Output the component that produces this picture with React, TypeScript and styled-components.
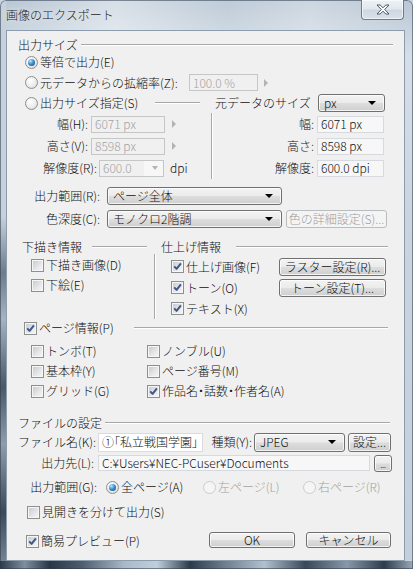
import styled, { createGlobalStyle } from 'styled-components';

const GlobalStyle = createGlobalStyle`
  html, body {
    margin: 0;
    padding: 0;
  }
  body {
    width: 413px;
    height: 569px;
    overflow: hidden;
    background: #c8d3de;
    font-family: "Noto Sans CJK JP", "Noto Sans", sans-serif;
    font-size: 12px;
    font-weight: 300;
    line-height: 14px;
    color: #111;
  }
`;

const Window = styled.div`
  box-sizing: border-box;
  width: 413px;
  height: 569px;
  display: flex;
  flex-direction: column;
  border-radius: 6px 6px 0 0;
  overflow: hidden;
  box-shadow: inset 0 0 0 1px rgba(45, 60, 78, 0.55);
  background:
    linear-gradient(90deg, #2c3948 0%, #7f8ea0 6%, #2a3644 12%, #4f5e70 20%, #a9b8c8 30%, #c2cedb 38%, #2d3a49 46%, #6b7a8c 54%, #b2c0ce 64%, #3a4756 74%, #8898aa 84%, #2f3b4a 93%, #9aa8b7 100%) bottom / 100% 8px no-repeat,
    linear-gradient(180deg, #c6d1dc 0%, #c6d1dc 38%, #6d7b8a 48%, #a6b3c1 56%, #4a5766 68%, #8e9cab 78%, #3c4958 90%, #7d8b9b 100%) left / 6px 100% no-repeat,
    linear-gradient(90deg, rgba(255, 255, 255, 0) 0%, rgba(255, 255, 255, 0.45) 28%, rgba(255, 255, 255, 0.1) 55%, rgba(255, 255, 255, 0.3) 75%, rgba(255, 255, 255, 0) 100%) top / 100% 30px no-repeat,
    linear-gradient(180deg, #b7c5d3 0%, #d6dfe8 10%, #c9d4df 40%, #c3cfdb 100%);
`;

const TitleBar = styled.div`
  flex: none;
  height: 30px;
  display: flex;
  align-items: flex-start;
  justify-content: space-between;
  padding-left: 6px;
`;

const Title = styled.span`
  margin-top: 8px;
  color: #1c1c1c;
  text-shadow: 0 0 6px rgba(255, 255, 255, 0.9);
`;

const CloseButton = styled.div`
  box-sizing: border-box;
  width: 43px;
  height: 20px;
  margin-right: 9px;
  display: flex;
  align-items: center;
  justify-content: center;
  border: 1px solid #6f7b88;
  border-top: none;
  border-radius: 0 0 4px 4px;
  background: linear-gradient(180deg, #eef2f6 0%, #e2e8ef 45%, #cfd8e2 55%, #d9e1ea 100%);
  box-shadow: inset 0 0 0 1px rgba(255, 255, 255, 0.6);
`;

const Client = styled.div`
  box-sizing: border-box;
  flex: none;
  height: 531px;
  margin: 0 8px 0 6px;
  padding: 7px 11px 0;
  border: 1px solid #8d9cac;
  background: #f0f0f0;
  display: flex;
  flex-direction: column;
`;

const Header = styled.div<{ $pl?: number; $mt?: number }>`
  display: flex;
  align-items: center;
  height: 14px;
  padding-left: ${(p) => p.$pl ?? 0}px;
  margin-top: ${(p) => p.$mt ?? 0}px;
  white-space: nowrap;
`;

const Rule = styled.div<{ $ml?: number; $mr?: number }>`
  flex: 1;
  height: 0;
  margin-left: ${(p) => p.$ml ?? 3}px;
  margin-right: ${(p) => p.$mr ?? 0}px;
  border-top: 1px solid #a8a8a8;
  border-bottom: 1px solid #ffffff;
`;

const Row = styled.div<{ $h?: number; $pl?: number; $pr?: number; $mt?: number }>`
  display: flex;
  align-items: center;
  height: ${(p) => p.$h ?? 20}px;
  padding-left: ${(p) => p.$pl ?? 0}px;
  padding-right: ${(p) => p.$pr ?? 0}px;
  margin-top: ${(p) => p.$mt ?? 0}px;
  white-space: nowrap;
`;

const RadioDot = styled.span<{ $on?: boolean; $off?: boolean; $ml?: number }>`
  box-sizing: border-box;
  flex: none;
  width: 13px;
  height: 13px;
  margin-left: ${(p) => p.$ml ?? 0}px;
  border-radius: 50%;
  border: 1px solid ${(p) => (p.$off ? '#cbcccd' : '#8e8f8f')};
  background: ${(p) =>
    p.$off ? '#f5f5f5' : 'radial-gradient(circle at 40% 35%, #ffffff 0%, #ececec 55%, #d0d0d0 100%)'};
  display: flex;
  align-items: center;
  justify-content: center;

  &::after {
    content: '';
    display: ${(p) => (p.$on ? 'block' : 'none')};
    width: 7px;
    height: 7px;
    border-radius: 50%;
    background: radial-gradient(circle at 35% 30%, #bfe9fc 0%, #3d92d2 45%, #0e3f76 100%);
  }
`;

const CheckBox = styled.span`
  box-sizing: border-box;
  flex: none;
  width: 13px;
  height: 13px;
  border: 1px solid #8e8f8f;
  background: linear-gradient(135deg, #c4c8cd 0%, #e9eaeb 65%, #f7f7f7 100%);
  box-shadow: inset 0 0 0 1px #f6f6f6;
  display: flex;
  align-items: center;
  justify-content: center;
`;

const OptText = styled.span<{ $w?: number; $ml?: number; $dim?: boolean; $palt?: boolean }>`
  flex: none;
  margin-left: ${(p) => p.$ml ?? 2}px;
  width: ${(p) => (p.$w ? `${p.$w}px` : 'auto')};
  color: ${(p) => (p.$dim ? '#a3a3a3' : 'inherit')};
  font-feature-settings: ${(p) => (p.$palt ? '"palt"' : 'normal')};
`;

const FieldLabel = styled.span<{ $w: number; $ml?: number }>`
  flex: none;
  width: ${(p) => p.$w}px;
  margin-left: ${(p) => p.$ml ?? 0}px;
  text-align: right;
`;

type BoxKind = 'disabled' | 'readonly' | 'edit';

const boxBorder: Record<BoxKind, string> = {
  disabled: '#c6c6c6',
  readonly: '#d6d9dd',
  edit: '#d9dbde',
};
const boxFill: Record<BoxKind, string> = {
  disabled: '#f0f0f0',
  readonly: '#f7f7f7',
  edit: '#ffffff',
};

const TextBox = styled.div<{ $w: number; $h?: number; $ml?: number; $kind?: BoxKind; $palt?: boolean }>`
  box-sizing: border-box;
  flex: none;
  width: ${(p) => p.$w}px;
  height: ${(p) => p.$h ?? 17}px;
  margin-left: ${(p) => p.$ml ?? 0}px;
  padding: 0 3px;
  display: flex;
  align-items: center;
  overflow: hidden;
  border: 1px solid ${(p) => boxBorder[p.$kind ?? 'readonly']};
  background: ${(p) => boxFill[p.$kind ?? 'readonly']};
  color: ${(p) => (p.$kind === 'disabled' ? '#a3a3a3' : 'inherit')};
  font-feature-settings: ${(p) => (p.$palt ? '"palt"' : 'normal')};
`;

const SpinArrow = styled.span<{ $ml?: number }>`
  flex: none;
  width: 0;
  height: 0;
  margin-left: ${(p) => p.$ml ?? 7}px;
  border-left: 4px solid #b3b3b3;
  border-top: 4px solid transparent;
  border-bottom: 4px solid transparent;
`;

const winButtonFace = `
  border: 1px solid #707070;
  border-radius: 3px;
  background: linear-gradient(180deg, #f3f3f3 0%, #ebebeb 48%, #dddddd 52%, #cfcfcf 100%);
  box-shadow: inset 0 0 0 1px rgba(255, 255, 255, 0.75);
`;

const Select = styled.div<{ $w: number; $h?: number; $ml?: number }>`
  box-sizing: border-box;
  flex: none;
  width: ${(p) => p.$w}px;
  height: ${(p) => p.$h ?? 18}px;
  margin-left: ${(p) => p.$ml ?? 0}px;
  display: flex;
  align-items: center;
  justify-content: space-between;
  padding: 0 8px 0 5px;
  ${winButtonFace}

  &::after {
    content: '';
    border-top: 4px solid #000;
    border-left: 4px solid transparent;
    border-right: 4px solid transparent;
  }
`;

const DimCombo = styled.div<{ $w: number; $ml?: number }>`
  box-sizing: border-box;
  flex: none;
  width: ${(p) => p.$w}px;
  height: 17px;
  margin-left: ${(p) => p.$ml ?? 0}px;
  display: flex;
  align-items: center;
  justify-content: space-between;
  padding: 0 5px 0 3px;
  border: 1px solid #c6c6c6;
  background: linear-gradient(90deg, #f0f0f0 0%, #f0f0f0 70%, #f7f7f7 70%);
  color: #a3a3a3;

  &::after {
    content: '';
    border-top: 4px solid #b3b3b3;
    border-left: 3.5px solid transparent;
    border-right: 3.5px solid transparent;
  }
`;

const Button = styled.div<{ $w: number; $h?: number; $ml?: number; $disabled?: boolean; $top?: boolean }>`
  box-sizing: border-box;
  flex: none;
  width: ${(p) => p.$w}px;
  height: ${(p) => p.$h ?? 18}px;
  margin-left: ${(p) => (p.$ml === undefined ? 'auto' : `${p.$ml}px`)};
  align-self: ${(p) => (p.$top ? 'flex-start' : 'center')};
  margin-top: ${(p) => (p.$top ? '2px' : '0')};
  display: flex;
  align-items: center;
  justify-content: center;
  ${(p) =>
    p.$disabled
      ? `
    border: 1px solid #b9bdc0;
    border-radius: 3px;
    background: #f4f4f4;
    color: #9d9d9d;
  `
      : winButtonFace}
`;

const DotsText = styled.span`
  font-size: 9px;
  line-height: 9px;
  margin-top: 3px;
  letter-spacing: -0.5px;
`;

const SizeSplit = styled.div`
  display: grid;
  grid-template-columns: 193px 1fr;
`;

const Column = styled.div`
  display: flex;
  flex-direction: column;
`;

const SideHead = styled.div`
  display: flex;
  align-items: center;
  justify-content: space-between;
  height: 20px;
  padding: 0 8px 0 4px;
  white-space: nowrap;
`;

const SideBox = styled.div<{ $pt?: number }>`
  display: flex;
  flex-direction: column;
  padding-top: ${(p) => p.$pt ?? 0}px;
  border-left: 1px solid #a8a8a8;
  box-shadow: inset 1px 0 0 #ffffff;
`;

const InfoSplit = styled.div`
  display: grid;
  grid-template-columns: 136px 1fr;
  margin-top: 11px;
`;

const PageGrid = styled.div`
  display: grid;
  grid-template-columns: 116px 1fr;
  grid-auto-rows: 20px;
  padding-left: 13px;
  margin-top: 6px;
`;

const GridCell = styled.div`
  display: flex;
  align-items: center;
  white-space: nowrap;
`;

function Check({ on }: { on?: boolean }) {
  return (
    <CheckBox>
      {on && (
        <svg width="9" height="9" viewBox="0 0 9 9">
          <path d="M1.2 4.4 L3.6 6.9 L7.9 1.4" fill="none" stroke="#41578a" strokeWidth="2" strokeLinejoin="round" />
        </svg>
      )}
    </CheckBox>
  );
}

export default function App() {
  return (
    <>
      <GlobalStyle />
      <Window>
        <TitleBar>
          <Title>画像のエクスポート</Title>
          <CloseButton>
            <svg width="14" height="11" viewBox="0 0 14 11">
              <path
                d="M1 1 H4.2 L7 3.8 L9.8 1 H13 L8.7 5.5 L13 10 H9.8 L7 7.2 L4.2 10 H1 L5.3 5.5 Z"
                fill="#ffffff"
                stroke="#4d5863"
                strokeWidth="1"
                strokeLinejoin="round"
              />
            </svg>
          </CloseButton>
        </TitleBar>

        <Client>
          <Header>
            <span>出力サイズ</span>
            <Rule $ml={3} />
          </Header>
          <Row $pl={7}>
            <RadioDot $on />
            <OptText>等倍で出力(E)</OptText>
          </Row>
          <Row $h={21} $pl={7}>
            <RadioDot />
            <OptText $w={149}>元データからの拡縮率(Z):</OptText>
            <TextBox $w={69} $h={17} $kind="disabled">100.0 %</TextBox>
            <SpinArrow $ml={6} />
          </Row>

          <SizeSplit>
            <Column>
              <Row $pl={7}>
                <RadioDot />
                <OptText>出力サイズ指定(S)</OptText>
                <Rule $ml={17} $mr={11} />
              </Row>
              <Row $h={22}>
                <FieldLabel $w={70}>幅(H):</FieldLabel>
                <TextBox $w={74} $ml={3} $kind="disabled">6071 px</TextBox>
                <SpinArrow />
              </Row>
              <Row $h={22}>
                <FieldLabel $w={70}>高さ(V):</FieldLabel>
                <TextBox $w={74} $ml={3} $kind="disabled">8598 px</TextBox>
                <SpinArrow />
              </Row>
              <Row $h={22}>
                <FieldLabel $w={79}>解像度(R):</FieldLabel>
                <DimCombo $w={65} $ml={2}>600.0</DimCombo>
                <OptText $ml={6}>dpi</OptText>
              </Row>
            </Column>
            <Column>
              <SideHead>
                <span>元データのサイズ</span>
                <Select $w={67}>px</Select>
              </SideHead>
              <SideBox>
                <Row $h={22}>
                  <FieldLabel $w={102}>幅:</FieldLabel>
                  <TextBox $w={67} $ml={3}>6071 px</TextBox>
                </Row>
                <Row $h={22}>
                  <FieldLabel $w={102}>高さ:</FieldLabel>
                  <TextBox $w={67} $ml={3}>8598 px</TextBox>
                </Row>
                <Row $h={22}>
                  <FieldLabel $w={102}>解像度:</FieldLabel>
                  <TextBox $w={67} $ml={3}>600.0 dpi</TextBox>
                </Row>
              </SideBox>
            </Column>
          </SizeSplit>

          <Row $h={21} $mt={6}>
            <FieldLabel $w={82}>出力範囲(R):</FieldLabel>
            <Select $w={175} $ml={7}>ページ全体</Select>
          </Row>
          <Row $h={21} $mt={2}>
            <FieldLabel $w={82}>色深度(C):</FieldLabel>
            <Select $w={175} $ml={7}>モノクロ2階調</Select>
            <Button $w={101} $ml={4} $disabled>
              色の詳細設定(S)...
            </Button>
          </Row>

          <InfoSplit>
            <Column>
              <Header $pl={4}>
                <span>下描き情報</span>
                <Rule $ml={10} $mr={7} />
              </Header>
              <Row $pl={13} $mt={1}>
                <Check />
                <OptText>下描き画像(D)</OptText>
              </Row>
              <Row $pl={13}>
                <Check />
                <OptText>下絵(E)</OptText>
              </Row>
            </Column>
            <Column>
              <Header $pl={7}>
                <span>仕上げ情報</span>
                <Rule $ml={15} $mr={5} />
              </Header>
              <SideBox $pt={2}>
                <Row $h={21} $pl={16}>
                  <Check on />
                  <OptText $w={93}>仕上げ画像(F)</OptText>
                  <Button $w={107} $ml={0}>
                    ラスター設定(R)...
                  </Button>
                </Row>
                <Row $h={21} $pl={16}>
                  <Check on />
                  <OptText $w={93}>トーン(O)</OptText>
                  <Button $w={107} $ml={0}>
                    トーン設定(T)...
                  </Button>
                </Row>
                <Row $h={21} $pl={16}>
                  <Check on />
                  <OptText>テキスト(X)</OptText>
                </Row>
              </SideBox>
            </Column>
          </InfoSplit>

          <Header $pl={6} $mt={2}>
            <Check on />
            <OptText>ページ情報(P)</OptText>
            <Rule $ml={20} $mr={5} />
          </Header>
          <PageGrid>
            <GridCell>
              <Check />
              <OptText>トンボ(T)</OptText>
            </GridCell>
            <GridCell>
              <Check />
              <OptText>ノンブル(U)</OptText>
            </GridCell>
            <GridCell>
              <Check />
              <OptText>基本枠(Y)</OptText>
            </GridCell>
            <GridCell>
              <Check />
              <OptText>ページ番号(M)</OptText>
            </GridCell>
            <GridCell>
              <Check />
              <OptText>グリッド(G)</OptText>
            </GridCell>
            <GridCell>
              <Check on />
              <OptText $palt>作品名・話数・作者名(A)</OptText>
            </GridCell>
          </PageGrid>

          <Header $mt={15}>
            <span>ファイルの設定</span>
            <Rule $ml={3} $mr={3} />
          </Header>
          <Row $mt={2}>
            <FieldLabel $w={77}>ファイル名(K):</FieldLabel>
            <TextBox $w={105} $h={19} $ml={3} $kind="edit" $palt>
              ①「私立戦国学園」
            </TextBox>
            <FieldLabel $w={42} $ml={7}>
              種類(Y):
            </FieldLabel>
            <Select $w={91} $h={19} $ml={2}>
              JPEG
            </Select>
            <Button $w={43} $h={19} $ml={3}>
              設定...
            </Button>
          </Row>
          <Row $mt={1}>
            <FieldLabel $w={76}>出力先(L):</FieldLabel>
            <TextBox $w={272} $h={16} $ml={4}>
              C:¥Users¥NEC-PCuser¥Documents
            </TextBox>
            <Button $w={18} $h={17} $ml={4}>
              <DotsText>...</DotsText>
            </Button>
          </Row>
          <Row $mt={4}>
            <FieldLabel $w={79}>出力範囲(G):</FieldLabel>
            <RadioDot $on $ml={9} />
            <OptText $w={82}>全ページ(A)</OptText>
            <RadioDot $off />
            <OptText $w={85} $dim>
              左ページ(L)
            </OptText>
            <RadioDot $off />
            <OptText $dim>右ページ(R)</OptText>
          </Row>
          <Row $mt={5} $pl={9}>
            <Check />
            <OptText>見開きを分けて出力(S)</OptText>
          </Row>
          <Row $h={22} $mt={8} $pl={8} $pr={2}>
            <Check on />
            <OptText>簡易プレビュー(P)</OptText>
            <Button $w={86} $h={16} $top>
              OK
            </Button>
            <Button $w={85} $h={16} $ml={11} $top>
              キャンセル
            </Button>
          </Row>
        </Client>
      </Window>
    </>
  );
}
